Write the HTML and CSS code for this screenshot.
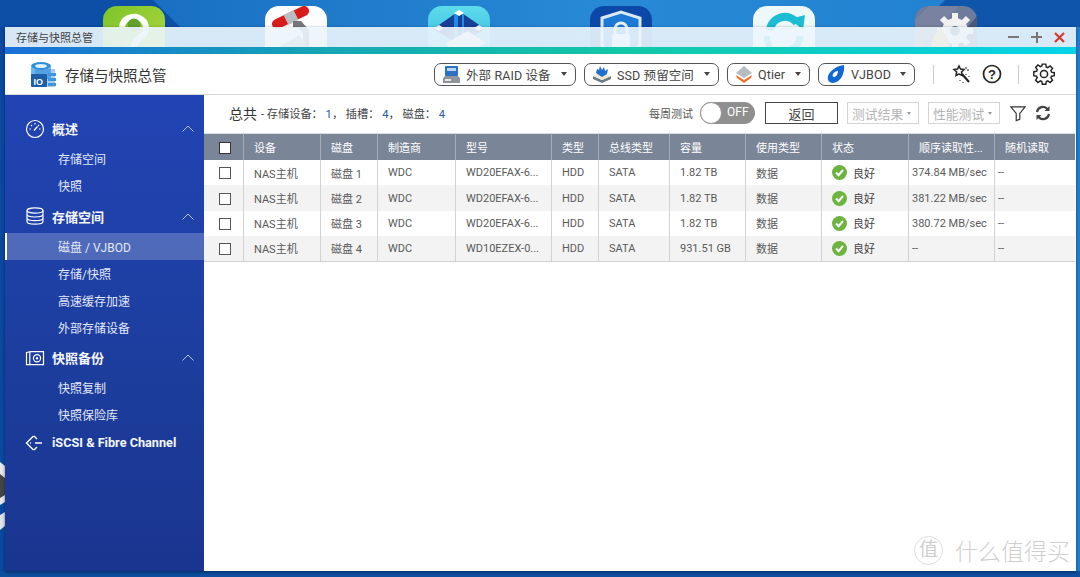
FILE: index.html
```html
<!DOCTYPE html>
<html lang="zh">
<head>
<meta charset="utf-8">
<title>存储与快照总管</title>
<link rel="stylesheet" href="styles.css">
</head>
<body>
<div class="desktop">
  <svg class="wallpaper" width="1080" height="577" viewBox="0 0 1080 577">
    <defs>
      <linearGradient id="wp" x1="0" y1="0" x2="1" y2="0">
        <stop offset="0" stop-color="#1467bb"/><stop offset=".55" stop-color="#2889d6"/><stop offset="1" stop-color="#2080cf"/>
      </linearGradient>
    </defs>
    <rect width="1080" height="577" fill="url(#wp)"/>
    <polygon points="0,0 153,0 180,27 0,27" fill="#0d4ea6"/>
    <polygon points="945,0 918,27 1080,27 1080,0" fill="#0f55ab"/>
    <rect x="0" y="27" width="6" height="550" fill="#0a49a0"/>
    <rect x="0" y="571" width="1080" height="6" fill="#0d4f9f"/>
    <path d="M0 462 L5 466 V502 L0 505Z" fill="#e8e8e8"/>
    <path d="M0 474 L5 478 V495 L0 498Z" fill="#444"/>
    <path d="M0 515 L5 512 V526 L0 530Z" fill="#dfe3ea"/>
  </svg>
  <div class="app-icons">
    <svg class="app-icon" width="62" height="48" viewBox="0 0 62 48">
      <defs><linearGradient id="g1" x1="0" y1="0" x2="1" y2="1"><stop offset="0" stop-color="#7dc32a"/><stop offset="1" stop-color="#b3da40"/></linearGradient></defs>
      <rect width="62" height="60" rx="14" fill="url(#g1)"/>
      <path d="M19 21a12 11 0 1 1 20 9c-5 4-8 6-9 14" fill="none" stroke="#fff" stroke-width="6"/>
      <circle cx="31" cy="19" r="6.500" fill="#62a02c"/>
    </svg>
    <svg class="app-icon" width="62" height="48" viewBox="0 0 62 48">
      <rect width="62" height="60" rx="14" fill="#fdfdfd"/>
      <path d="M12 18 39 5" fill="none" stroke="#d81c1c" stroke-width="10" stroke-linecap="round"/>
      <path d="M21 14 31 9" fill="none" stroke="#b9bdc1" stroke-width="11"/>
      <path d="M28 15h8l8 9v24h-6V27l-5-5h-5Z" fill="#74787d"/>
      <path d="M16 40 34 29l10 13-6 6H20Z" fill="#a9adb1"/>
    </svg>
    <svg class="app-icon" width="62" height="48" viewBox="0 0 62 48">
      <defs><linearGradient id="g3" x1="0" y1="0" x2="0" y2="1"><stop offset="0" stop-color="#5ddcea"/><stop offset="1" stop-color="#2aa8e0"/></linearGradient></defs>
      <rect width="62" height="60" rx="14" fill="url(#g3)"/>
      <path d="M31 5 57 23 31 38 5 23Z" fill="#173f96"/>
      <path d="M26 8h4v30h-4zM34 8h2v30h-2z" fill="#1b8fe6"/>
      <path d="M31 4l5 3-5 3-5-3ZM11 19l5 3-5 3-5-3ZM51 19l5 3-5 3-5-3Z" fill="#fff"/>
      <path d="M18 37 40 25 58 37 36 48H24Z" fill="#f2f2f2"/>
    </svg>
    <svg class="app-icon" width="62" height="48" viewBox="0 0 62 48">
      <rect width="62" height="60" rx="14" fill="#0c48a8"/>
      <path d="M12 12 31 6l19 6v26c0 6-8 10-19 14-11-4-19-8-19-14Z" fill="#1c7ad6" stroke="#dbe8f5" stroke-width="3"/>
      <rect x="22" y="28" width="18" height="18" rx="2" fill="#e6eef7"/>
      <path d="M25 28v-5a6 6 0 0 1 12 0v5" fill="none" stroke="#e6eef7" stroke-width="3"/>
    </svg>
    <svg class="app-icon" width="62" height="48" viewBox="0 0 62 48">
      <rect width="62" height="60" rx="14" fill="#eef8f8"/>
      <path d="M17 24a15 15 0 0 1 27-7" fill="none" stroke="#1cbdd2" stroke-width="8"/>
      <path d="M37 13 52 9 50 24Z" fill="#1cbdd2"/>
      <path d="M47 30a16 16 0 0 1-22 14" fill="none" stroke="#1cbdd2" stroke-width="7"/>
      <path d="M14 30a16 16 0 0 0 4 12" fill="none" stroke="#1cbdd2" stroke-width="6"/>
    </svg>
    <svg class="app-icon" width="62" height="48" viewBox="0 0 62 48">
      <rect width="62" height="60" rx="14" fill="#6e7b9a"/>
      <path d="M0 14 14 0h30L0 48Z" fill="#7d88a4" opacity=".7"/>
      <path d="M62 10V60H20Z" fill="#4a5878"/>
      <g fill="none" stroke="#f2f2f2">
        <circle cx="40" cy="25" r="9" stroke-width="8"/>
        <path d="M40 7v7M40 36v7M22 25h7M51 25h7M27 12l5 5M48 33l5 5M53 12l-5 5M32 33l-5 5" stroke-width="6"/>
      </g>
      <circle cx="40" cy="25" r="4" fill="#4a5878"/>
      <path d="M16 48c-2-12 4-20 10-27 1 6 8 9 8 17 0 4-1 7-3 10Z" fill="#f6b634"/>
    </svg>
  </div>

  <main class="window">
    <header class="titlebar">
      <span class="titlebar-text">存储与快照总管</span>
      <div class="win-controls">
        <span class="wc wc-min"></span>
        <span class="wc wc-max"></span>
        <svg width="11" height="11" viewBox="0 0 11 11"><path d="M1 1l9 9M10 1l-9 9" stroke="#d9372c" stroke-width="2.200"/></svg>
      </div>
    </header>
    <div class="stripe"></div>

    <div class="toolbar">
      <svg class="logo" width="27" height="27" viewBox="0 0 27 27">
        <ellipse cx="11" cy="5" rx="10" ry="4" fill="#2c8fe0"/>
        <path d="M1 5v13h20V5a10 4 0 0 1-20 0Z" fill="#6cb6ee"/>
        <path d="M5 8h20v18H5z" fill="#2a82d4" opacity=".4"/>
        <ellipse cx="11" cy="5" rx="6" ry="2" fill="#dff0fc"/>
        <rect x="1" y="13" width="16" height="13" rx="1" fill="#1c5ea8"/>
        <text x="3.500" y="23.500" class="logo-text">IO</text>
        <path d="M18 12h8v3h-8zM18 17h8v3h-8zM18 22h8v3h-8z" fill="#3a97e2"/>
      </svg>
      <h1 class="app-title">存储与快照总管</h1>
      <div class="tool-group">
        <button class="pill pill-raid">
          <svg width="19" height="19" viewBox="0 0 19 19"><rect x="3" y="1" width="13" height="10" rx="1" fill="#2d71c4"/><rect x="5" y="3" width="9" height="3" fill="#bcd6f2"/><path d="M3 11h13l2 2v5H1v-5Z" fill="#8f959b"/><rect x="3" y="14" width="6" height="2" fill="#e3e5e7"/></svg>
          <span>外部 RAID 设备</span><i class="caret"></i>
        </button>
        <button class="pill pill-ssd">
          <svg width="20" height="19" viewBox="0 0 20 19"><path d="M1 11l9 4 9-4v3l-9 4-9-4Z" fill="#6e7a84"/><path d="M1 11l9-4 9 4-9 4Z" fill="#efe8d0"/><path d="M4 8 5 4l2 1 1-4 2 4 2-3 1 4 3-2-1 5-5 3Z" fill="#1e6fd0"/></svg>
          <span>SSD 预留空间</span><i class="caret"></i>
        </button>
        <button class="pill pill-qtier">
          <svg width="18" height="19" viewBox="0 0 18 19"><path d="M9 1 17 8 9 13 1 8Z" fill="#b7bcc1"/><path d="M1 10l8 5 8-5-1 3-7 5-7-5Z" fill="#f0702c"/></svg>
          <span>Qtier</span><i class="caret"></i>
        </button>
        <button class="pill pill-vjbod">
          <svg width="20" height="20" viewBox="0 0 20 20"><path d="M18 1c1 8-3 17-11 18-4 0-6-3-5-7C4 6 11 2 18 1Z" fill="#1169d6"/><path d="M12 7c0 3-2 6-4 6-1 0-2-1-1-3 1-2 3-3 5-3Z" fill="#fff"/></svg>
          <span>VJBOD</span><i class="caret"></i>
        </button>
      </div>
      <span class="tool-sep sep-a"></span>
      <svg class="tool-icon" width="20" height="20" viewBox="0 0 20 20" fill="none" stroke="#222" stroke-width="1.500"><path d="M7 2l1.500 3 3.500.5-2.500 2.500.7 3.500L7 10l-3 1.500.7-3.500L2 5.500 5.500 5Z"/><path d="M10 10l7 8" stroke-width="2"/><path d="M14 3v2M17 6h-2M14 10v1M17 12v1M8 16v1M11 18v1" stroke-width="1"/></svg>
      <svg class="tool-icon" width="20" height="20" viewBox="0 0 20 20"><circle cx="10" cy="10" r="8.500" fill="none" stroke="#222" stroke-width="1.700"/><text x="10" y="14.500" class="help-text">?</text></svg>
      <span class="tool-sep sep-b"></span>
      <svg class="tool-icon gear" width="22" height="22" viewBox="0 0 22 22" fill="none" stroke="#222" stroke-width="1.500"><path d="M9.200 1.500h3.600l.5 2.900 1.600.7 2.400-1.700 2.500 2.500-1.700 2.400.7 1.600 2.900.5v3.200l-2.900.5-.7 1.600 1.700 2.400-2.500 2.500-2.400-1.700-1.600.7-.5 2.900H9.200l-.5-2.900-1.600-.7-2.400 1.700-2.500-2.500 1.700-2.400-.7-1.600-2.900-.5V9.400l2.900-.5.7-1.600-1.700-2.400 2.500-2.500 2.400 1.700 1.600-.7Z" transform="translate(.5 -.3) scale(.96)"/><circle cx="11" cy="11" r="3.600"/></svg>
    </div>

    <div class="body">
      <nav class="sidebar">
        <div class="nav-group">
          <svg class="nav-icon" width="20" height="20" viewBox="0 0 20 20" fill="none" stroke="#fff" stroke-width="1.200"><circle cx="10" cy="10" r="8.500"/><path d="M10 4v1.500M4.500 10H6M15.500 10H14M6 6l1 1M14 6l-1 1M9 11.500l3.500-4"/></svg>
          <span>概述</span><svg class="chev" width="12" height="7" viewBox="0 0 12 7"><path d="M.5 6.500 6 1l5.500 5.500" fill="none" stroke="#b8c6e8"/></svg>
        </div>
        <a class="nav-item">存储空间</a>
        <a class="nav-item">快照</a>
        <div class="nav-group nav-group-tall">
          <svg class="nav-icon" width="20" height="18" viewBox="0 0 20 18" fill="none" stroke="#fff" stroke-width="1.200"><ellipse cx="10" cy="3.500" rx="8" ry="2.700"/><path d="M2 3.500v11c0 1.500 3.600 2.700 8 2.700s8-1.200 8-2.700v-11M2 7.300c0 1.500 3.600 2.700 8 2.700s8-1.200 8-2.700M2 11c0 1.500 3.600 2.700 8 2.700s8-1.200 8-2.700"/></svg>
          <span>存储空间</span><svg class="chev" width="12" height="7" viewBox="0 0 12 7"><path d="M.5 6.500 6 1l5.500 5.500" fill="none" stroke="#b8c6e8"/></svg>
        </div>
        <a class="nav-item is-active">磁盘 / VJBOD</a>
        <a class="nav-item">存储/快照</a>
        <a class="nav-item">高速缓存加速</a>
        <a class="nav-item">外部存储设备</a>
        <div class="nav-group">
          <svg class="nav-icon" width="20" height="16" viewBox="0 0 20 16" fill="none" stroke="#fff" stroke-width="1.200"><path d="M1.500 2.500l4-.8h13v13h-17Z"/><path d="M4.800 2v12.500"/><circle cx="12" cy="8.200" r="3.600"/><circle cx="12" cy="8.200" r="1.200" fill="#fff" stroke="none"/></svg>
          <span>快照备份</span><svg class="chev" width="12" height="7" viewBox="0 0 12 7"><path d="M.5 6.500 6 1l5.500 5.500" fill="none" stroke="#b8c6e8"/></svg>
        </div>
        <a class="nav-item">快照复制</a>
        <a class="nav-item">快照保险库</a>
        <div class="nav-group nav-group-last">
          <svg class="nav-icon" width="20" height="16" viewBox="0 0 20 16" fill="none" stroke="#fff" stroke-width="1.400"><path d="M8.500 1 1.500 8l7 7M5 8h1M10 8h7M9 1l3 3M9 15l3-3"/></svg>
          <span>iSCSI &amp; Fibre Channel</span>
        </div>
      </nav>

      <section class="content">
        <div class="summary">
          <strong class="sum-title">总共</strong>
          <span class="sum-text">- 存储设备： <b>1</b>， 插槽： <b>4</b>， 磁盘： <b>4</b></span>
          <div class="sum-actions">
            <span class="weekly">每周测试</span>
            <span class="toggle"><i class="knob"></i><em>OFF</em></span>
            <button class="btn-back">返回</button>
            <button class="btn-dis btn-result">测试结果<i class="mini-caret"></i></button>
            <button class="btn-dis btn-perf">性能测试<i class="mini-caret"></i></button>
            <svg class="filter" width="16" height="17" viewBox="0 0 18 17"><path d="M1 1h16l-6 7.500V15l-4 1.500V8.500Z" fill="none" stroke="#333" stroke-width="1.300"/></svg>
            <svg class="refresh" width="16" height="16" viewBox="0 0 16 16" fill="none" stroke="#444" stroke-width="2.200"><path d="M2 7a6 6 0 0 1 10.500-3"/><path d="M14 9a6 6 0 0 1-10.500 3"/><path d="M14.500 1v5h-5ZM1.500 15v-5h5Z" fill="#444" stroke="none"/></svg>
          </div>
        </div>

        <table class="grid">
          <colgroup>
            <col class="c-check"><col class="c-dev"><col class="c-disk"><col class="c-vendor"><col class="c-model"><col class="c-type"><col class="c-bus"><col class="c-cap"><col class="c-use"><col class="c-state"><col class="c-seq"><col class="c-rand">
          </colgroup>
          <thead>
            <tr>
              <th class="t-center"><i class="cb cb-head"></i></th><th>设备</th><th>磁盘</th><th>制造商</th><th>型号</th><th>类型</th><th>总线类型</th><th>容量</th><th>使用类型</th><th>状态</th><th>顺序读取性...</th><th>随机读取</th>
            </tr>
          </thead>
          <tbody>
            <tr><td class="t-center"><i class="cb"></i></td><td>NAS主机</td><td>磁盘 1</td><td>WDC</td><td>WD20EFAX-6...</td><td>HDD</td><td>SATA</td><td>1.82 TB</td><td>数据</td><td class="state"><svg width="15" height="15" viewBox="0 0 15 15"><circle cx="7.500" cy="7.500" r="7.500" fill="#6cb33f"/><path d="M4 7.500l2.600 2.700L11 5" fill="none" stroke="#fff" stroke-width="2"/></svg><span>良好</span></td><td class="num">374.84 MB/sec</td><td class="num">--</td></tr>
            <tr><td class="t-center"><i class="cb"></i></td><td>NAS主机</td><td>磁盘 2</td><td>WDC</td><td>WD20EFAX-6...</td><td>HDD</td><td>SATA</td><td>1.82 TB</td><td>数据</td><td class="state"><svg width="15" height="15" viewBox="0 0 15 15"><circle cx="7.500" cy="7.500" r="7.500" fill="#6cb33f"/><path d="M4 7.500l2.600 2.700L11 5" fill="none" stroke="#fff" stroke-width="2"/></svg><span>良好</span></td><td class="num">381.22 MB/sec</td><td class="num">--</td></tr>
            <tr><td class="t-center"><i class="cb"></i></td><td>NAS主机</td><td>磁盘 3</td><td>WDC</td><td>WD20EFAX-6...</td><td>HDD</td><td>SATA</td><td>1.82 TB</td><td>数据</td><td class="state"><svg width="15" height="15" viewBox="0 0 15 15"><circle cx="7.500" cy="7.500" r="7.500" fill="#6cb33f"/><path d="M4 7.500l2.600 2.700L11 5" fill="none" stroke="#fff" stroke-width="2"/></svg><span>良好</span></td><td class="num">380.72 MB/sec</td><td class="num">--</td></tr>
            <tr><td class="t-center"><i class="cb"></i></td><td>NAS主机</td><td>磁盘 4</td><td>WDC</td><td>WD10EZEX-0...</td><td>HDD</td><td>SATA</td><td>931.51 GB</td><td>数据</td><td class="state"><svg width="15" height="15" viewBox="0 0 15 15"><circle cx="7.500" cy="7.500" r="7.500" fill="#6cb33f"/><path d="M4 7.500l2.600 2.700L11 5" fill="none" stroke="#fff" stroke-width="2"/></svg><span>良好</span></td><td class="num">--</td><td class="num">--</td></tr>
          </tbody>
        </table>

        <div class="watermark">
          <span class="wm-seal">值</span><span class="wm-text">什么值得买</span>
        </div>
      </section>
    </div>
  </main>
</div>
</body>
</html>
```

FILE: styles.css
```css
* { box-sizing: border-box; }
html, body { margin: 0; padding: 0; height: 100%; overflow: hidden; }
body { font-family: Roboto, "Noto Sans CJK SC", sans-serif; color: #444; }
.desktop { position: relative; width: 1080px; height: 577px; overflow: hidden; }
.wallpaper { position: absolute; left: 0; top: 0; display: block; }
.app-icons { position: absolute; left: 103px; top: 6px; display: flex; gap: 100.400px; }
.app-icon { display: block; flex: none; }

.window { position: absolute; left: 5px; top: 27px; width: 1071px; height: 544px; display: flex; flex-direction: column; box-shadow: 0 1px 3px rgba(0,0,30,.5); }
.titlebar { height: 20px; flex: none; background: rgba(236,245,252,.9); display: flex; align-items: center; justify-content: space-between; padding: 0 11px; }
.titlebar-text { font-size: 11px; color: #444; }
.win-controls { display: flex; align-items: center; gap: 12px; }
.wc { display: block; position: relative; width: 11px; height: 11px; }
.wc-min::before, .wc-max::before, .wc-max::after { content: ""; position: absolute; background: #777; left: 0; top: 4.500px; width: 11px; height: 2px; }
.wc-max::after { left: 4.500px; top: 0; width: 2px; height: 11px; }
.stripe { height: 7px; flex: none; background: linear-gradient(90deg, #1a6fd8 0%, #14a6b4 30%, #12c8a8 58%, #06d3e8 100%); }

.toolbar { height: 41px; flex: none; background: #fff; border-bottom: 1px solid #d8d8d8; display: flex; align-items: center; padding: 0 21px 0 25px; }
.logo { flex: none; }
.logo-text { font: 700 9px "Liberation Sans", sans-serif; fill: #fff; }
.app-title { margin: 0 0 0 8px; font-size: 14.500px; font-weight: 400; color: #333; white-space: nowrap; }
.tool-group { margin-left: auto; display: flex; gap: 8px; }
.pill { height: 23px; border: 1px solid #555; border-radius: 7px; background: #fff; padding: 0 8px 0 7px; display: flex; align-items: center; gap: 5px; font: 12.500px Roboto, "Noto Sans CJK SC", sans-serif; color: #444; letter-spacing: .1px; white-space: nowrap; }
.pill-raid { width: 142px; }
.pill-ssd { width: 135px; }
.pill-qtier { width: 83px; }
.pill-vjbod { width: 97px; }
.pill .caret { margin-left: auto; border-left: 3.500px solid transparent; border-right: 3.500px solid transparent; border-top: 4px solid #444; }
.tool-sep { width: 1px; height: 19px; background: #ccc; flex: none; }
.sep-a { margin: 0 18px 0 18px; }
.sep-b { margin: 0 14px 0 16px; }
.tool-icon { flex: none; display: block; }
.tool-icon + .tool-icon { margin-left: 10px; }
.help-text { font: 700 13px "Liberation Sans", sans-serif; text-anchor: middle; fill: #222; }

.body { flex: 1; min-height: 0; display: flex; }
.sidebar { width: 199px; flex: none; background: linear-gradient(180deg, #2244b4 0%, #1c3d9c 60%, #1a3590 100%); color: #fff; padding-top: 17px; }
.nav-group { display: flex; align-items: center; height: 33px; padding: 0 10px 0 20px; font-size: 13px; font-weight: 700; color: #f4f6fc; }
.nav-group-tall { height: 34px; }
.nav-icon { flex: none; margin: 0 7px 0 0; }
.nav-group span { flex: 1; }
.chev { flex: none; }
.nav-item { display: flex; align-items: center; height: 27px; padding-left: 53px; font-size: 12px; color: #e4e9f6; }
.nav-item.is-active { background: rgba(255,255,255,.22); border-left: 2px solid #fff; padding-left: 51px; }
.nav-group-last { font-size: 12.700px; height: 29px; }

.content { flex: 1; min-width: 0; background: #fff; position: relative; }
.summary { height: 36px; margin-bottom: 2px; display: flex; align-items: center; padding: 0 25px; color: #444; }
.sum-title { font-size: 14px; font-weight: 400; color: #333; margin-right: 4px; }
.sum-text { font-size: 11.200px; white-space: pre; }
.sum-text b { font-weight: 400; color: #1d5a9e; }
.sum-actions { margin-left: auto; display: flex; align-items: center; }
.weekly { font-size: 11px; color: #555; margin-right: 7px; }
.toggle { position: relative; display: block; width: 55px; height: 22px; border-radius: 11px; background: #8f8f8f; }
.knob { position: absolute; left: 0; top: 0; width: 22px; height: 22px; border-radius: 50%; background: #fff; border: 1px solid #999; }
.toggle em { position: absolute; left: 27px; top: 3px; font: 12px Roboto, sans-serif; color: #fff; }
.btn-back { width: 73px; height: 22px; margin-left: 10px; border: 1px solid #444; background: #fff; font: 13px "Noto Sans CJK SC", sans-serif; color: #444; padding: 0; }
.btn-dis { height: 22px; width: 72px; margin-left: 9px; border: 1px solid #d4d4d4; background: #fff; font: 12.800px "Noto Sans CJK SC", sans-serif; color: #b5b5b5; padding: 0 4px; display: flex; align-items: center; gap: 4px; white-space: nowrap; }
.mini-caret { border-left: 2.500px solid transparent; border-right: 2.500px solid transparent; border-top: 3px solid #999; }
.filter { margin-left: 10px; flex: none; }
.refresh { margin-left: 9px; flex: none; }

.grid { width: 871px; border-collapse: separate; border-spacing: 0; table-layout: fixed; font-size: 11px; }
.c-check { width: 39px; } .c-dev { width: 77px; } .c-disk { width: 57px; } .c-vendor { width: 78px; }
.c-model { width: 96px; } .c-type { width: 47px; } .c-bus { width: 71px; } .c-cap { width: 76px; }
.c-use { width: 76px; } .c-state { width: 87px; } .c-seq { width: 86px; } .c-rand { width: 81px; }
.grid th { height: 27px; background: #7b8598; color: #fff; font-weight: 400; text-align: left; padding: 0 0 0 10px; border-left: 1px solid #a5adba; border-top: 1px solid #dcdfe4; white-space: nowrap; overflow: hidden; }
.grid td { height: 25.400px; padding: 0 0 0 10px; color: #5a5a5a; border-left: 1px solid #d2d2d2; white-space: nowrap; overflow: hidden; }
.grid th.t-center, .grid td.t-center { padding: 0 0 0 2px; text-align: center; border-left: 0; }
.grid td.num { padding-left: 3px; }
.grid tbody tr:nth-child(even) td { background: #f3f3f3; }
.grid tbody tr:last-child td { border-bottom: 1px solid #d2d2d2; }
.cb { display: inline-block; width: 12px; height: 12px; border: 1px solid #555; background: #fff; vertical-align: middle; }
.cb-head { border-color: #333; }
.state svg { vertical-align: middle; margin-right: 6px; }
.state span { vertical-align: middle; color: #444; }

.watermark { position: absolute; right: 6px; bottom: 4px; display: flex; align-items: center; color: #cfcfcf; }
.wm-seal { width: 29px; height: 29px; border: 1px solid #ddd; border-radius: 50%; font-size: 19px; line-height: 26px; text-align: center; margin-right: 12px; }
.wm-text { font-size: 23px; font-weight: 300; }
```
